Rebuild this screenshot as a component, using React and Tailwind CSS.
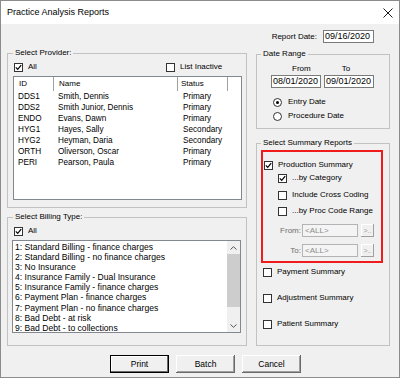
import React from "react";

const providers = [
  { id: "DDS1", name: "Smith, Dennis", status: "Primary" },
  { id: "DDS2", name: "Smith Junior, Dennis", status: "Primary" },
  { id: "ENDO", name: "Evans, Dawn", status: "Primary" },
  { id: "HYG1", name: "Hayes, Sally", status: "Secondary" },
  { id: "HYG2", name: "Heyman, Daria", status: "Secondary" },
  { id: "ORTH", name: "Oliverson, Oscar", status: "Primary" },
  { id: "PERI", name: "Pearson, Paula", status: "Primary" },
];

const billingTypes = [
  "1: Standard Billing - finance charges",
  "2: Standard Billing - no finance charges",
  "3: No Insurance",
  "4: Insurance Family - Dual Insurance",
  "5: Insurance Family - finance charges",
  "6: Payment Plan - finance charges",
  "7: Payment Plan - no finance charges",
  "8: Bad Debt - at risk",
  "9: Bad Debt - to collections",
];

function CheckBox({ checked }) {
  return (
    <span className="flex h-[9px] w-[9px] shrink-0 items-center justify-center border border-[#333333] bg-white">
      {checked && (
        <svg width="7" height="7" viewBox="0 0 7 7">
          <path d="M0.8 3.4 L2.7 5.3 L6.2 1.2" stroke="#000" strokeWidth="1.2" fill="none" />
        </svg>
      )}
    </span>
  );
}

function CheckRow({ checked, label, className = "" }) {
  return (
    <div className={`flex h-[10px] items-center gap-[5px] leading-[10px] ${className}`}>
      <CheckBox checked={checked} />
      <span>{label}</span>
    </div>
  );
}

function RadioRow({ checked, label, className = "" }) {
  return (
    <div className={`flex h-[10px] items-center gap-[6px] leading-[10px] ${className}`}>
      <span className="flex h-[9px] w-[9px] shrink-0 items-center justify-center rounded-full border border-[#333333] bg-white">
        {checked && <span className="h-[3px] w-[3px] rounded-full bg-black" />}
      </span>
      <span>{label}</span>
    </div>
  );
}

function Group({ title, className = "", children }) {
  return (
    <fieldset className={`border border-[#c2c2c2] ${className}`}>
      <legend className="px-[2px] leading-[10px]">{title}</legend>
      {children}
    </fieldset>
  );
}

function DateBox({ value, className = "" }) {
  return (
    <div className={`h-[13px] w-[50px] border border-[#7a7a7a] bg-white pl-[1px] text-[9px] leading-[11px] ${className}`}>
      {value}
    </div>
  );
}

function RangeRow({ label, className = "" }) {
  return (
    <div className={`ml-[16px] flex h-[13px] items-center ${className}`}>
      <span className="w-[22px] text-right text-[#6d6d6d]">{label}</span>
      <div className="ml-[1px] h-[13px] w-[56px] border border-[#b4b4b4] bg-[#f4f4f4] pl-[2px] leading-[11px] text-[#8c8c8c]">
        &lt;ALL&gt;
      </div>
      <div className="ml-[3px] flex h-[13px] w-[13px] items-center justify-center bg-[#f0f0f0] text-[7px] leading-none text-[#a0a0a0] shadow-[inset_-1px_-1px_0_#a0a0a0,inset_1px_1px_0_#ffffff]">
        &gt;..
      </div>
    </div>
  );
}

function WinButton({ label, isDefault }) {
  return (
    <button
      type="button"
      className={`h-[18px] w-[59px] bg-[#f0f0f0] text-[8.5px] leading-none text-black ${
        isDefault
          ? "border border-black shadow-[inset_-1px_-1px_0_#696969,inset_1px_1px_0_#ffffff]"
          : "shadow-[inset_-1px_-1px_0_#696969,inset_1px_1px_0_#ffffff,inset_-2px_-2px_0_#a0a0a0]"
      }`}
    >
      {label}
    </button>
  );
}

export default function App() {
  return (
    <div className="h-[379px] w-[400px] bg-white font-['Liberation_Sans',Arial,sans-serif] text-[8px] text-black">
      <div className="flex h-[378px] flex-col border border-[#8c8c8c] bg-[#f0f0f0]">
        <div className="flex h-[23px] shrink-0 items-center justify-between bg-white pl-[6px] pr-[6px]">
          <span className="text-[9px]">Practice Analysis Reports</span>
          <svg width="10" height="10" viewBox="0 0 10 10">
            <path d="M0.5 0.5 L9.5 9.5 M9.5 0.5 L0.5 9.5" stroke="#000" strokeWidth="0.9" />
          </svg>
        </div>

        <div className="flex gap-[9px] pl-[6px]">
          <div className="flex w-[240px] flex-col pt-[24px]">
            <Group title="Select Provider:" className="h-[160px] pl-[5px] pr-[4px]">
              <div className="mt-[4px] flex">
                <CheckRow checked label="All" className="ml-[1px] w-[152px]" />
                <CheckRow label="List Inactive" />
              </div>
              <div className="mt-[4px] h-[124px] border border-[#828790] bg-white">
                <div className="flex h-[14px] leading-[14px]">
                  <div className="w-[40px] border-r border-[#a0a0a0] pl-[5px]">ID</div>
                  <div className="w-[124px] border-r border-[#a0a0a0] pl-[5px]">Name</div>
                  <div className="w-[50px] border-r border-[#a0a0a0] pl-[3px]">Status</div>
                </div>
                <div className="text-[8.2px]">
                  {providers.map((p) => (
                    <div key={p.id} className="flex h-[11px] leading-[11px]">
                      <div className="w-[40px] pl-[4px]">{p.id}</div>
                      <div className="w-[124px] pl-[4px]">{p.name}</div>
                      <div className="pl-[5px]">{p.status}</div>
                    </div>
                  ))}
                </div>
              </div>
            </Group>

            <Group title="Select Billing Type:" className="mt-[4px] h-[134px] pl-[5px] pr-[5px]">
              <div className="mt-[4px]">
                <CheckRow checked label="All" className="ml-[1px]" />
              </div>
              <div className="mt-[4px] ml-[-1px] flex h-[93px] border border-[#828790] bg-white">
                <div className="flex-1 pl-[2px] pt-[1px] text-[8.6px]">
                  {billingTypes.map((b) => (
                    <div key={b} className="h-[10.1px] leading-[10.1px] whitespace-nowrap">
                      {b}
                    </div>
                  ))}
                </div>
                <div className="flex w-[13px] flex-col bg-[#f0f0f0]">
                  <div className="flex h-[13px] items-center justify-center">
                    <svg width="7" height="4" viewBox="0 0 7 4">
                      <path d="M0.5 3.5 L3.5 0.7 L6.5 3.5" stroke="#555" strokeWidth="1" fill="none" />
                    </svg>
                  </div>
                  <div className="h-[53px] bg-[#cdcdcd]" />
                  <div className="flex-1" />
                  <div className="flex h-[13px] items-center justify-center">
                    <svg width="7" height="4" viewBox="0 0 7 4">
                      <path d="M0.5 0.5 L3.5 3.3 L6.5 0.5" stroke="#555" strokeWidth="1" fill="none" />
                    </svg>
                  </div>
                </div>
              </div>
            </Group>
          </div>

          <div className="flex w-[134px] flex-col pt-[6px]">
            <div className="flex h-[13px] items-center justify-end gap-[6px] pr-[16px]">
              <span>Report Date:</span>
              <DateBox value="09/16/2020" className="w-[51px]" />
            </div>

            <Group title="Date Range" className="mt-[6px] h-[80px] pl-[4px]">
              <div className="mt-[5px] flex h-[10px] pl-[31px] leading-[10px]">
                <span>From</span>
                <span className="ml-[31px]">To</span>
              </div>
              <div className="mt-[1px] flex gap-[3px] pl-[10px]">
                <DateBox value="08/01/2020" />
                <DateBox value="09/01/2020" />
              </div>
              <RadioRow checked label="Entry Date" className="mt-[9px] ml-[12px]" />
              <RadioRow label="Procedure Date" className="mt-[4px] ml-[12px]" />
            </Group>

            <Group title="Select Summary Reports" className="mt-[9px] h-[208px] pl-[4px]">
              <div className="mt-[2px] w-[122px] border-2 border-[#f01c1c] pb-[4px]">
                <CheckRow checked label="Production Summary" className="mt-[8px] ml-[1px]" />
                <CheckRow checked label="...by Category" className="mt-[3px] ml-[15px]" />
                <CheckRow label="Include Cross Coding" className="mt-[7px] ml-[15px]" />
                <CheckRow label="...by Proc Code Range" className="mt-[6px] ml-[15px]" />
                <RangeRow label="From:" className="mt-[8px]" />
                <RangeRow label="To:" className="mt-[7px]" />
              </div>
              <CheckRow label="Payment Summary" className="mt-[4px] ml-[2px]" />
              <CheckRow label="Adjustment Summary" className="mt-[16px] ml-[2px]" />
              <CheckRow label="Patient Summary" className="mt-[16px] ml-[2px]" />
            </Group>
          </div>
        </div>

        <div className="mt-[9px] flex gap-[7px] pl-[109px]">
          <WinButton label="Print" isDefault />
          <WinButton label="Batch" />
          <WinButton label="Cancel" />
        </div>
      </div>
    </div>
  );
}
